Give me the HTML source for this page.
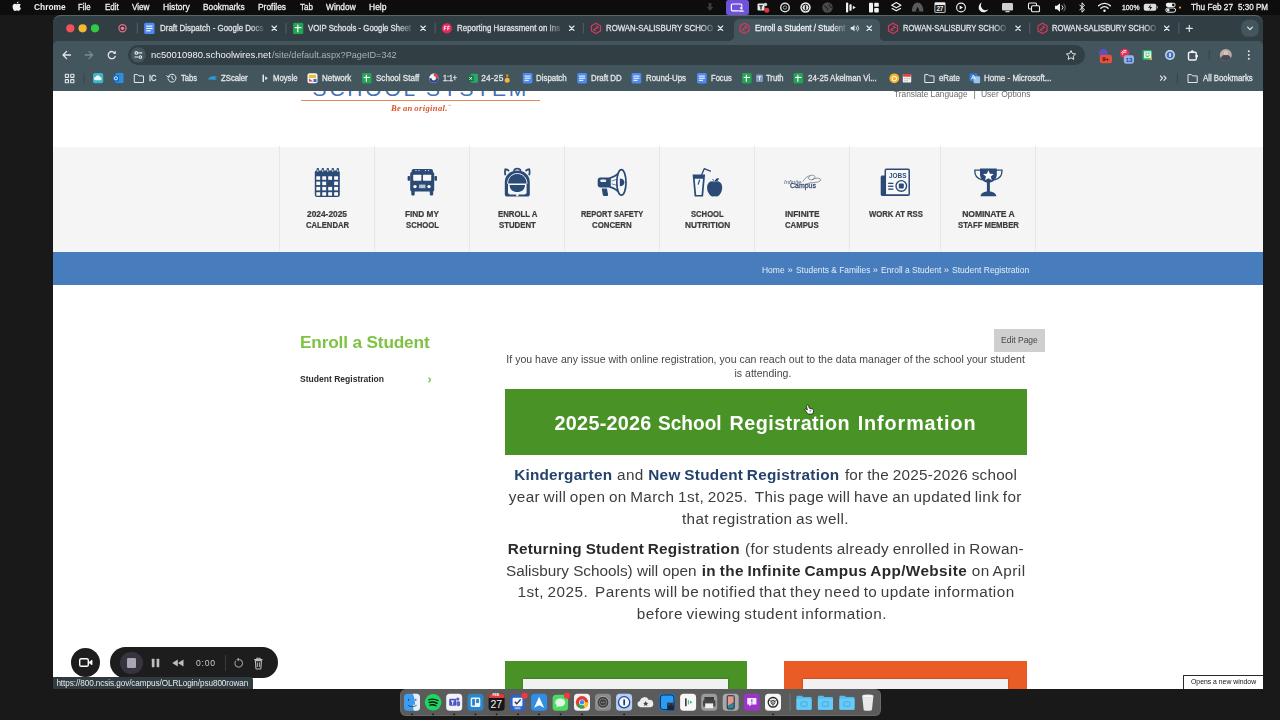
<!DOCTYPE html>
<html lang="en">
<head>
<meta charset="utf-8">
<title>Enroll a Student / Student Registration</title>
<style>
*{box-sizing:border-box;margin:0;padding:0}
html,body{width:1280px;height:720px;overflow:hidden;background:#191919;font-family:"Liberation Sans",sans-serif}
.b{position:absolute}
.t{position:absolute;white-space:pre;line-height:1}
svg{position:absolute;overflow:visible}
#txt{position:absolute;left:0;top:0;width:1280px;height:720px;will-change:transform}
</style>
</head>
<body>
<!-- macOS menu bar -->
<div class="b" style="left:0;top:0;width:1280px;height:15px;background:#0d0d0d"></div>
<div class="b" style="left:725.600px;top:0;width:23.300px;height:14.500px;background:#6f52d9;border-radius:2.500px"></div>
<svg width="1280" height="16" style="left:0;top:0" fill="#f2f2f2" stroke="none">
  <!-- apple -->
  <path d="M12.6 6.4C12.6 4.6 13.8 3.8 14.9 3.8c.7 0 1.3.4 1.8.4s1.200-.5 2-.5c.8 0 1.600.4 2.100 1.100-1.400.8-1.200 2.800.2 3.300-.4 1.200-1.400 2.900-2.500 2.900-.6 0-.9-.4-1.700-.4-.8 0-1.100.4-1.700.4-1.200 0-2.500-2.400-2.500-4.600z"/>
  <path d="M16.7 3.500c0-1 .8-1.900 1.800-2 .1 1.100-.8 2-1.800 2z"/>
  <!-- dim download arrow -->
  <path d="M708.6 3h2.800v4h2l-3.400 4-3.400-4h2z" fill="#3c3c3c"/>
  <!-- recorder icon in purple -->
  <rect x="731.4" y="4" width="10.400" height="6.800" rx="1" fill="none" stroke="#fff" stroke-width="1.200"/>
  <circle cx="741.3" cy="8" r="1.500" fill="#fff" stroke="#6f52d9" stroke-width=".6"/><path d="M738.3 11.900c0-2.400 6-2.400 6 0z" fill="#fff" stroke="#6f52d9" stroke-width=".5"/>
  <!-- teams -->
  <rect x="757.5" y="3.500" width="7" height="7" rx="1" fill="#e8e8e8"/><circle cx="765.500" cy="4.500" r="1.700" fill="#cfcfcf"/>
  <path d="M759.300 5.200h3.400v1h-1.100v3.300h-1.200v-3.300h-1.100z" fill="#0d0d0d"/>
  <circle cx="766.800" cy="10.200" r="2.500" fill="#e5343d"/>
  <!-- chatgpt-ish knot -->
  <circle cx="785" cy="7.500" r="4.300" fill="none" stroke="#d8d8d8" stroke-width="1.500"/><circle cx="785" cy="7.500" r="1.700" fill="none" stroke="#bdbdbd" stroke-width=".8"/>
  <!-- 1password -->
  <circle cx="805.500" cy="7.500" r="5.200" fill="#e9e9e9"/><circle cx="805.500" cy="7.500" r="3.300" fill="none" stroke="#0d0d0d" stroke-width=".9"/><rect x="804.800" y="5.200" width="1.400" height="4.600" rx=".6" fill="#0d0d0d"/>
  <!-- dim globe -->
  <circle cx="827.500" cy="7.500" r="5.200" fill="#4a4a4a"/><path d="M824 6l3 1.500 1 3M829 4l1.500 3.500 2-.5" stroke="#1c1c1c" stroke-width="1" fill="none"/>
  <!-- bars -->
  <rect x="846" y="2.500" width="2.200" height="10" rx=".7"/><rect x="849.400" y="4.300" width="2.200" height="6.400" rx=".7"/><path d="M852.800 5.800l3 1.700-3 1.700z"/>
  <!-- layout -->
  <rect x="869" y="2.800" width="4" height="9.600" rx=".9"/><rect x="874.200" y="2.800" width="4.600" height="4" rx=".9"/><rect x="874.200" y="8" width="4.600" height="4.400" rx=".9"/>
  <!-- layers -->
  <path d="M896.300 2.600l4.600 2.600-4.600 2.600-4.600-2.600z" fill="none" stroke="#f2f2f2" stroke-width="1.200" stroke-linejoin="round"/>
  <path d="M891.700 8.200l4.600 2.600 4.600-2.600" fill="none" stroke="#f2f2f2" stroke-width="1.200" stroke-linejoin="round"/>
  <!-- dim semicircle -->
  <path d="M911.900 11.400c0-11.800 11.400-11.800 11.400 0z" fill="#5a5a5a"/><path d="M915.600 11.400l2-4.600 2 4.600z" fill="#0d0d0d"/>
  <!-- calendar 27 -->
  <rect x="934.500" y="2.300" width="11" height="10.400" rx="1.300" fill="#ececec"/><rect x="935.300" y="5" width="9.400" height="7" rx=".6" fill="#1b1b1b"/>
  <!-- play circle -->
  <circle cx="961" cy="7.500" r="4.400" fill="none" stroke="#f2f2f2" stroke-width="1.100"/><path d="M959.700 5.500l3.300 2-3.300 2z"/>
  <!-- moon -->
  <path d="M982 2.600a5 5 0 1 0 6.300 6.600 4.600 4.600 0 0 1-6.300-6.600z"/>
  <!-- display -->
  <rect x="1002" y="3" width="11" height="7.400" rx="1.200" fill="#cfcfcf"/><rect x="1005.300" y="11" width="4.400" height="1.300" rx=".5" fill="#cfcfcf"/>
  <!-- overlapping rects -->
  <rect x="1028.500" y="3" width="8" height="6" rx="1.300" fill="none" stroke="#f2f2f2" stroke-width="1.100"/><rect x="1031.500" y="5.800" width="8" height="6" rx="1.300" fill="#0d0d0d" stroke="#f2f2f2" stroke-width="1.100"/>
  <!-- volume -->
  <path d="M1055 5.800h2l3-2.600v8.600l-3-2.600h-2z"/><path d="M1061.800 5.300a3 3 0 0 1 0 4.400" fill="none" stroke="#f2f2f2" stroke-width="1"/><path d="M1063.600 3.800a5 5 0 0 1 0 7.400" fill="none" stroke="#8a8a8a" stroke-width="1"/>
  <!-- bluetooth -->
  <path d="M1079.500 4.800l5 5-2.500 2.400v-9.400l2.500 2.400-5 5" fill="none" stroke="#f2f2f2" stroke-width="1" stroke-linejoin="round"/>
  <!-- wifi -->
  <path d="M1098.600 5.800a8.500 8.500 0 0 1 11.800 0" fill="none" stroke="#f2f2f2" stroke-width="1.400" stroke-linecap="round"/>
  <path d="M1100.900 8.200a5.200 5.200 0 0 1 7.200 0" fill="none" stroke="#f2f2f2" stroke-width="1.400" stroke-linecap="round"/>
  <circle cx="1104.500" cy="10.800" r="1.200"/>
  <!-- battery -->
  <rect x="1143.800" y="3.800" width="12.500" height="7" rx="1.800" fill="#dedede"/><rect x="1156.800" y="6" width="1.100" height="2.600" rx=".5" fill="#9a9a9a"/>
  <path d="M1150.800 4.300l-2.600 3.400h2l-.8 2.800 2.800-3.600h-2z" fill="#0d0d0d"/>
  <!-- control centre -->
  <rect x="1165.800" y="2.800" width="9.800" height="4.200" rx="2.100"/><circle cx="1173.300" cy="4.900" r="1.300" fill="#0d0d0d"/>
  <rect x="1165.800" y="8" width="9.800" height="4.200" rx="2.100" fill="none" stroke="#f2f2f2" stroke-width="1"/><circle cx="1168.200" cy="10.100" r="1.300"/>
  <circle cx="1180" cy="7.600" r="1.100" fill="#f5a623"/>
</svg>
<span class="t" style="left:936.6px;top:5.6px;font-size:6.4px;font-weight:700;color:#f0f0f0;letter-spacing:-.3px">27</span>

<!-- browser window chrome -->
<div class="b" style="left:53.3px;top:15px;width:1209.4px;height:32px;background:#313e44;border-radius:8px 8px 0 0"></div>
<div class="b" style="left:53.3px;top:15px;width:1209.4px;height:9px;border-top:1px solid rgba(120,135,142,.55);border-radius:8px 8px 0 0"></div>
<div class="b" style="left:53.3px;top:41px;width:1209.4px;height:49.5px;background:#44565d;border-radius:5px 5px 0 0"></div>
<!-- active tab -->
<div class="b" style="left:734px;top:18.900px;width:145.500px;height:22.100px;background:#44565d;border-radius:5.500px 5.500px 0 0"></div>
<svg width="1280" height="42" style="left:0;top:0">
  <path d="M729 41h5v-5a5 5 0 0 1-5 5zM884.500 41h-5v-5a5 5 0 0 0 5 5z" fill="#44565d"/>
  <!-- traffic lights -->
  <circle cx="70.300" cy="28.300" r="4.100" fill="#f2505a"/><circle cx="82.600" cy="28.300" r="4.100" fill="#f6b731"/><circle cx="95" cy="28.300" r="4.100" fill="#2fcb45"/>
  <!-- pinned recording tab -->
  <circle cx="122.500" cy="28.300" r="3.600" fill="none" stroke="#ee6a82" stroke-width="1.200"/><circle cx="122.500" cy="28.300" r="1.600" fill="#f08aa0"/>
  <!-- tab separators -->
  <g fill="#51626a"><rect x="136.800" y="23" width="1" height="10.500"/><rect x="285.500" y="23" width="1" height="10.500"/><rect x="434.600" y="23" width="1" height="10.500"/><rect x="582.800" y="23" width="1" height="10.500"/><rect x="1029.200" y="23" width="1" height="10.500"/><rect x="1178.400" y="23" width="1" height="10.500"/></g>
  <!-- docs favicon -->
  <rect x="144.200" y="22.800" width="10.300" height="11.200" rx="1.500" fill="#4d8bf0"/><g fill="#fff"><rect x="146.200" y="25.600" width="6.300" height="1.100"/><rect x="146.200" y="27.900" width="6.300" height="1.100"/><rect x="146.200" y="30.200" width="4.500" height="1.100"/></g>
  <!-- sheets favicon -->
  <rect x="293" y="22.800" width="10.300" height="11.200" rx="1.500" fill="#23a455"/><g fill="#fff"><rect x="294.800" y="27" width="6.700" height="1.200"/><rect x="297.200" y="24.600" width="1.200" height="7.600"/></g>
  <!-- reporting favicon -->
  <circle cx="446.800" cy="28.300" r="5.100" fill="#e6275f"/><path d="M444.300 26.300h2.200M444.300 28.300h1.800M444.300 26.300v4M447.800 26.300h2M447.800 28.300h1.600M447.800 26.300v4" stroke="#fff" stroke-width=".9" fill="none"/>
  <!-- schoolwires favicons (red hex) -->
  <g fill="none" stroke="#d43a5c" stroke-width="1.200" stroke-linejoin="round">
    <path d="M596 23.200l4.500 2.600v5.200l-4.500 2.600-4.500-2.600v-5.200z"/><path d="M596 26l2.200 1.200-4.400 2.400 2.200 1.200"/>
    <path d="M744.500 23.200l4.500 2.600v5.200l-4.500 2.600-4.500-2.600v-5.200z"/><path d="M744.500 26l2.200 1.200-4.400 2.400 2.200 1.200"/>
    <path d="M893 23.200l4.500 2.600v5.200l-4.500 2.600-4.500-2.600v-5.200z"/><path d="M893 26l2.200 1.200-4.400 2.400 2.200 1.200"/>
    <path d="M1042.500 23.200l4.500 2.600v5.200l-4.500 2.600-4.500-2.600v-5.200z"/><path d="M1042.500 26l2.200 1.200-4.400 2.400 2.200 1.200"/>
  </g>
  <!-- close Xs -->
  <g stroke="#e4e8ea" stroke-width="1.150" stroke-linecap="round">
    <path d="M272 26l4.500 4.500M276.500 26l-4.500 4.500"/><path d="M420.800 26l4.500 4.500M425.300 26l-4.500 4.500"/><path d="M569.500 26l4.500 4.500M574 26l-4.500 4.500"/>
    <path d="M718.200 26l4.500 4.500M722.700 26l-4.500 4.500"/><path d="M867 26l4.500 4.500M871.500 26l-4.500 4.500"/><path d="M1015.800 26l4.500 4.500M1020.300 26l-4.500 4.500"/>
    <path d="M1164.500 26l4.500 4.500M1169 26l-4.500 4.500"/>
    <path d="M1186.200 28.300h6.200M1189.300 25.200v6.200"/>
  </g>
  <!-- speaker in active tab -->
  <path d="M850.700 27h1.600l2.200-1.900v6.400l-2.200-1.900h-1.600z" fill="#e4e8ea"/><path d="M855.900 26.600a2.400 2.400 0 0 1 0 3.400M857.300 25.300a4.300 4.300 0 0 1 0 6" fill="none" stroke="#e4e8ea" stroke-width=".9"/>
  <!-- tab search button -->
  <rect x="1241.3" y="19.8" width="17.4" height="17" rx="6.5" fill="#44565d"/><path d="M1247.600 27.200l2.400 2.400 2.400-2.400" fill="none" stroke="#e4e8ea" stroke-width="1.200" stroke-linecap="round" stroke-linejoin="round"/>
</svg>

<!-- toolbar -->
<div class="b" style="left:128.200px;top:45px;width:957px;height:19.600px;background:#313e44;border-radius:10px"></div>
<svg width="1280" height="92" style="left:0;top:0">
  <circle cx="138.300" cy="54.800" r="7.600" fill="#44565d"/>
  <g stroke="#e4e8ea" stroke-width="1.100" fill="none" stroke-linecap="round"><path d="M138.600 52.900h3.200M134.800 57h3.200"/><circle cx="136.300" cy="52.900" r="1.300"/><circle cx="140.400" cy="57" r="1.300"/></g>
  <!-- back / forward / reload -->
  <g fill="none" stroke-width="1.300" stroke-linecap="round" stroke-linejoin="round">
    <path d="M70.500 55h-7.300M66.600 51.400l-3.600 3.600 3.600 3.600" stroke="#e4e8ea"/>
    <path d="M85.200 55h7.300M89 51.400l3.600 3.600-3.600 3.600" stroke="#7c8a90"/>
    <path d="M114.900 53.200a3.600 3.600 0 1 0 .3 3.200" stroke="#e4e8ea"/>
  </g>
  <path d="M115.900 50.800v3h-3z" fill="#e4e8ea"/>
  <!-- star -->
  <path d="M1071 50.600l1.400 3 3.200.4-2.400 2.200.6 3.200-2.800-1.600-2.800 1.600.6-3.200-2.400-2.200 3.200-.4z" fill="none" stroke="#e4e8ea" stroke-width="1" stroke-linejoin="round"/>
  <!-- extensions -->
  <circle cx="1103.3" cy="53.6" r="4.5" fill="#5d4ec2"/><rect x="1099.8" y="54.8" width="12.2" height="8.5" rx="2.2" fill="#e8503a"/>
  <circle cx="1124.6" cy="53.4" r="4.7" fill="#e62e55"/><path d="M1122.4 54.6a2.8 2.8 0 0 1 4-2.300M1121.400 53a4.600 4.600 0 0 1 5-2.500" stroke="#fff" stroke-width=".9" fill="none"/><rect x="1123.8" y="55.3" width="10.2" height="8.4" rx="2.100" fill="#8fb3f0"/>
  <rect x="1142.5" y="50.1" width="9.5" height="9.8" rx="1.3" fill="#27b064"/><rect x="1144" y="51.3" width="7.2" height="7" rx=".6" fill="#dff3e6"/><path d="M1145.700 55.400c1 1.300 2.600 1.300 3.600 0" stroke="#1f9a55" stroke-width="1" fill="none"/><rect x="1145.800" y="52.600" width=".9" height="1.500" fill="#1f9a55"/><rect x="1148.400" y="52.600" width=".9" height="1.500" fill="#1f9a55"/><path d="M1152 57v2.900h-3z" fill="#f0a030"/>
  <circle cx="1170" cy="55" r="4.900" fill="#d5e0f2"/><circle cx="1170" cy="55" r="3.500" fill="#3f72c2"/><rect x="1169.300" y="52.900" width="1.400" height="4.200" rx=".7" fill="#fff"/>
  <rect x="1188.500" y="52.300" width="7.800" height="7.700" rx="1.200" fill="none" stroke="#f2f4f5" stroke-width="1.400"/><circle cx="1192.300" cy="51.700" r="1.400" fill="#f2f4f5"/><circle cx="1196.700" cy="56.100" r="1.400" fill="#f2f4f5"/>
  <rect x="1208.700" y="50" width="1" height="10" fill="#33434a"/>
  <circle cx="1225.800" cy="55" r="6" fill="#b9aca6"/><path d="M1220.800 58.400a6 6 0 0 0 10 0c-.6-2.600-2.600-3.600-5-3.600s-4.400 1-5 3.600z" fill="#4a4a52"/><circle cx="1225.800" cy="53" r="2.300" fill="#d9c3b4"/>
  <g fill="#e4e8ea"><circle cx="1248.800" cy="51.300" r="1"/><circle cx="1248.800" cy="55" r="1"/><circle cx="1248.800" cy="58.700" r="1"/></g>

  <!-- bookmarks bar icons -->
  <g fill="none" stroke="#e4e8ea" stroke-width="1.100"><rect x="65.300" y="74.200" width="3.200" height="3.200" rx=".4"/><rect x="70.700" y="74.200" width="3.200" height="3.200" rx=".4"/><rect x="65.300" y="79.600" width="3.200" height="3.200" rx=".4"/><rect x="70.700" y="79.600" width="3.200" height="3.200" rx=".4"/></g>
  <rect x="83.500" y="73" width="1" height="10.500" fill="#33434a"/>
  <rect x="93" y="73" width="10.200" height="10.200" rx="1.800" fill="#3fb5c8"/><path d="M95.200 80.300a1.800 1.800 0 0 1 .5-3.500 2.300 2.300 0 0 1 4.400.3 1.600 1.600 0 0 1 0 3.200z" fill="#e7f7fa"/>
  <rect x="115.500" y="73" width="8" height="10" rx="1" fill="#2a8fe0"/><rect x="112.800" y="75.200" width="6.200" height="6.200" rx="1" fill="#1268c4"/><circle cx="115.900" cy="78.300" r="1.600" fill="none" stroke="#fff" stroke-width=".9"/>
  <!-- folders -->
  <g fill="none" stroke="#e4e8ea" stroke-width="1" stroke-linejoin="round">
    <path d="M134.300 74.600h3.400l1.200 1.300h4.600v6.600h-9.200z"/>
    <path d="M924.800 74.600h3.400l1.200 1.300h4.600v6.600h-9.200z"/>
    <path d="M1188 74.600h3.400l1.200 1.300h4.600v6.600h-9.200z"/>
  </g>
  <!-- history icon -->
  <g fill="none" stroke="#e4e8ea" stroke-width="1" stroke-linecap="round"><path d="M168.300 76.500a4 4 0 1 1-.3 2.300"/><path d="M172 76.300v2.200l1.500.9"/><path d="M166.800 75.800l1.300 1.600 1.700-1"/></g>
  <!-- zscaler -->
  <path d="M207.800 79.500c2-3.400 6-4.200 9.600-2.400-1.200.2-2 .8-2.500 1.600 1 .2 1.700.8 2 1.600-3-.9-6-.6-9.100-.8z" fill="#2a9fe0"/>
  <!-- moysle -->
  <rect x="262.500" y="74.500" width="1.500" height="7.500" rx=".5" fill="#e4e8ea"/><path d="M265.200 76.300l2.600 2-2.600 2z" fill="#e4e8ea"/>
  <!-- network -->
  <rect x="307.500" y="73.200" width="10" height="10" rx="2" fill="#f3f3f3"/><path d="M309 75h7v3h-7z" fill="#f0c02b"/><path d="M309 78.500l4 3h-4z" fill="#e23b4f"/><path d="M313.500 79h3v3h-3z" fill="#3e63d6"/>
  <!-- sheets icons -->
  <g><rect x="362" y="73" width="9.600" height="10.400" rx="1.400" fill="#23a455"/><rect x="363.600" y="76.900" width="6.400" height="1.100" fill="#fff"/><rect x="365.800" y="74.700" width="1.100" height="7" fill="#fff"/></g>
  <g><rect x="742" y="73" width="9.600" height="10.400" rx="1.400" fill="#23a455"/><rect x="743.600" y="76.900" width="6.400" height="1.100" fill="#fff"/><rect x="745.800" y="74.700" width="1.100" height="7" fill="#fff"/></g>
  <g><rect x="793.500" y="73" width="9.600" height="10.400" rx="1.400" fill="#23a455"/><rect x="795.100" y="76.900" width="6.400" height="1.100" fill="#fff"/><rect x="797.300" y="74.700" width="1.100" height="7" fill="#fff"/></g>
  <!-- 1:1+ icon -->
  <circle cx="433.800" cy="78.200" r="4.600" fill="#f3f3f3"/><path d="M433.800 73.600a4.600 4.600 0 0 1 4.600 4.600h-2.400a2.200 2.200 0 0 0-2.200-2.200z" fill="#e23b4f"/><path d="M429.200 78.200a4.600 4.600 0 0 0 9.200 0h-2.400a2.200 2.200 0 0 1-4.400 0z" fill="#2b3f9a"/>
  <!-- excel -->
  <rect x="470.500" y="73.800" width="7.500" height="9" rx=".8" fill="#2aa765"/><rect x="467.800" y="75.600" width="5.800" height="5.600" rx=".8" fill="#12703f"/><path d="M469.300 76.900l2.800 3M472.100 76.900l-2.800 3" stroke="#fff" stroke-width=".8"/>
  <!-- medal emoji -->
  <circle cx="507.200" cy="80.200" r="2.500" fill="#f2b63a"/><path d="M505.800 74.500h2.800l-.8 3h-1.200z" fill="#d98a2b"/>
  <!-- docs icons -->
  <g><rect x="522.800" y="73" width="9.600" height="10.400" rx="1.400" fill="#4d8bf0"/><g fill="#fff"><rect x="524.600" y="75.600" width="6" height="1"/><rect x="524.600" y="77.700" width="6" height="1"/><rect x="524.600" y="79.800" width="4.200" height="1"/></g></g>
  <g><rect x="577.300" y="73" width="9.600" height="10.400" rx="1.400" fill="#4d8bf0"/><g fill="#fff"><rect x="579.100" y="75.600" width="6" height="1"/><rect x="579.100" y="77.700" width="6" height="1"/><rect x="579.100" y="79.800" width="4.200" height="1"/></g></g>
  <g><rect x="631.600" y="73" width="9.600" height="10.400" rx="1.400" fill="#4d8bf0"/><g fill="#fff"><rect x="633.400" y="75.600" width="6" height="1"/><rect x="633.400" y="77.700" width="6" height="1"/><rect x="633.400" y="79.800" width="4.200" height="1"/></g></g>
  <g><rect x="697" y="73" width="9.600" height="10.400" rx="1.400" fill="#4d8bf0"/><g fill="#fff"><rect x="698.800" y="75.600" width="6" height="1"/><rect x="698.800" y="77.700" width="6" height="1"/><rect x="698.800" y="79.800" width="4.200" height="1"/></g></g>
  <!-- small T icon -->
  <rect x="756" y="74.500" width="7" height="7.500" rx="1.200" fill="#7f97bb"/><path d="M757.700 76.200h3.600v1h-1.300v3.400h-1v-3.400h-1.300z" fill="#e9eef6"/>
  <!-- emojis -->
  <circle cx="894.300" cy="78.300" r="4.900" fill="#f6b42c"/><circle cx="894.300" cy="78.600" r="2.300" fill="none" stroke="#fff" stroke-width="1"/>
  <rect x="902.800" y="74" width="8.400" height="8.600" rx="1.200" fill="#f1f1f1"/><rect x="902.800" y="74" width="8.400" height="2.800" rx="1.200" fill="#e0463c"/><g fill="#b9b9c6"><rect x="904.200" y="78" width="1.400" height="1.200"/><rect x="906.400" y="78" width="1.400" height="1.200"/><rect x="908.600" y="78" width="1.400" height="1.200"/><rect x="904.200" y="80.200" width="1.400" height="1.200"/><rect x="906.400" y="80.200" width="1.400" height="1.200"/></g>
  <!-- microsoft translate-ish icon -->
  <rect x="969.500" y="73.600" width="8" height="7.600" rx="1.200" fill="#2f7fd6"/><rect x="973.500" y="76.200" width="6.600" height="7" rx="1.200" fill="#9cc3ee"/><path d="M971.300 79.400l2-4.400 2 4.400M972 78h2.600" stroke="#fff" stroke-width=".8" fill="none"/>
  <!-- overflow chevrons -->
  <path d="M1160.400 76l2.200 2.200-2.200 2.200M1163.900 76l2.200 2.200-2.200 2.200" fill="none" stroke="#e4e8ea" stroke-width="1.100" stroke-linecap="round" stroke-linejoin="round"/>
  <rect x="1176.800" y="73" width="1" height="10.500" fill="#33434a"/>
</svg>
<span class="t" style="left:1102.300px;top:56.100px;font-size:6px;font-weight:700;color:#3a1208;letter-spacing:-.2px">9+</span>
<span class="t" style="left:1125.800px;top:56.600px;font-size:6px;font-weight:700;color:#1d3f8a;letter-spacing:-.2px">13</span>
<!-- page -->
<div class="b" style="left:53.3px;top:90.5px;width:1209.4px;height:598.5px;background:#fff"></div>
<!-- clipped district logo text (bottom part peeks below browser chrome) -->
<div class="b" style="left:296px;top:90.5px;width:250px;height:8px;overflow:hidden">
  <span class="t" style="left:16.6px;top:-12.4px;font-size:21px;color:#4471b6;letter-spacing:2.8px">SCHOOL SYSTEM</span>
</div>
<div class="b" style="left:300.8px;top:99.6px;width:239px;height:1.1px;background:#e8895a"></div>
<!-- icon nav band -->
<div class="b" style="left:53.3px;top:146.5px;width:1209.4px;height:105.5px;background:#f5f5f5"></div>

<div class="b" style="left:279.3px;top:146.4px;width:1.2px;height:105px;background:#e7e7e7"></div>
<div class="b" style="left:374.0px;top:146.4px;width:1.2px;height:105px;background:#e7e7e7"></div>
<div class="b" style="left:468.8px;top:146.4px;width:1.2px;height:105px;background:#e7e7e7"></div>
<div class="b" style="left:563.7px;top:146.4px;width:1.2px;height:105px;background:#e7e7e7"></div>
<div class="b" style="left:658.6px;top:146.4px;width:1.2px;height:105px;background:#e7e7e7"></div>
<div class="b" style="left:753.6px;top:146.4px;width:1.2px;height:105px;background:#e7e7e7"></div>
<div class="b" style="left:848.6px;top:146.4px;width:1.2px;height:105px;background:#e7e7e7"></div>
<div class="b" style="left:939.8px;top:146.4px;width:1.2px;height:105px;background:#e7e7e7"></div>
<div class="b" style="left:1035.3px;top:146.4px;width:1.2px;height:105px;background:#e7e7e7"></div>
<div class="b" style="left:53.3px;top:251.6px;width:1209.4px;height:33.1px;background:#487dbd"></div>
<svg width="1280" height="260" style="left:0;top:0" fill="#2b4a76">
<!-- calendar -->
<rect x="316.6" y="168" width="2.4" height="5" rx="1.1"/>
<rect x="321.6" y="168" width="2.4" height="5" rx="1.1"/>
<rect x="326.6" y="168" width="2.4" height="5" rx="1.1"/>
<rect x="331.6" y="168" width="2.4" height="5" rx="1.1"/>
<rect x="336.6" y="168" width="2.4" height="5" rx="1.1"/>
<rect x="314.8" y="170.6" width="25" height="26.3" rx="1.8"/>
<rect x="316.30" y="176.30" width="3.9" height="3.5" fill="#fbfbfb"/>
<rect x="322.25" y="176.30" width="3.9" height="3.5" fill="#fbfbfb"/>
<rect x="328.20" y="176.30" width="3.9" height="3.5" fill="#fbfbfb"/>
<rect x="334.15" y="176.30" width="3.9" height="3.5" fill="#fbfbfb"/>
<rect x="316.30" y="181.60" width="3.9" height="3.5" fill="#fbfbfb"/>
<rect x="322.25" y="181.60" width="3.9" height="3.5" fill="#fbfbfb"/>
<rect x="334.15" y="181.60" width="3.9" height="3.5" fill="#fbfbfb"/>
<rect x="316.30" y="186.90" width="3.9" height="3.5" fill="#fbfbfb"/>
<rect x="322.25" y="186.90" width="3.9" height="3.5" fill="#fbfbfb"/>
<rect x="328.20" y="186.90" width="3.9" height="3.5" fill="#fbfbfb"/>
<rect x="334.15" y="186.90" width="3.9" height="3.5" fill="#fbfbfb"/>
<rect x="316.30" y="192.20" width="3.9" height="3.5" fill="#fbfbfb"/>
<rect x="322.25" y="192.20" width="3.9" height="3.5" fill="#fbfbfb"/>
<rect x="328.20" y="192.20" width="3.9" height="3.5" fill="#fbfbfb"/>
<rect x="334.15" y="192.20" width="3.9" height="3.5" fill="#fbfbfb"/>
<rect x="317.3" y="169.4" width="1" height="2.6" rx=".5" fill="#dfe5ee"/>
<rect x="322.3" y="169.4" width="1" height="2.6" rx=".5" fill="#dfe5ee"/>
<rect x="327.3" y="169.4" width="1" height="2.6" rx=".5" fill="#dfe5ee"/>
<rect x="332.3" y="169.4" width="1" height="2.6" rx=".5" fill="#dfe5ee"/>
<rect x="337.3" y="169.4" width="1" height="2.6" rx=".5" fill="#dfe5ee"/>
<!-- bus -->
<rect x="411.6" y="169" width="21.4" height="5" rx="2"/>
<rect x="410.2" y="171.9" width="24" height="19.5" rx="1.6"/>
<rect x="407.6" y="176" width="2.6" height="4.8" rx=".8"/><rect x="434.4" y="176" width="2.6" height="4.8" rx=".8"/>
<rect x="411.3" y="190" width="3.4" height="5.4" rx=".8"/><rect x="429.8" y="190" width="3.4" height="5.4" rx=".8"/>
<rect x="413.2" y="174.7" width="8.2" height="6" rx=".6" fill="#fbfbfb"/><rect x="423" y="174.7" width="8.2" height="6" rx=".6" fill="#fbfbfb"/>
<circle cx="415" cy="186.6" r="1.7" fill="#fbfbfb"/><circle cx="429" cy="186.6" r="1.7" fill="#fbfbfb"/>
<rect x="419.1" y="184.6" width="6.3" height="3.6" fill="#b9c3d2"/>
<g fill="#e8edf3"><circle cx="416" cy="170.6" r=".7"/><circle cx="419" cy="170.6" r=".7"/><circle cx="425.500" cy="170.6" r=".7"/><circle cx="428.500" cy="170.6" r=".7"/></g>
<!-- backpack -->
<path d="M504.600 175.500c-.8-2.600-.6-5.600.2-7.200 1.800.2 3.600.8 4.800 1.800l-1 1.600c-.8-.6-1.800-1-2.600-1.100-.3 1.300-.1 3 .3 4.300z"/>
<path d="M530 175.500c.8-2.600.6-5.600-.2-7.200-1.800.2-3.600.8-4.800 1.800l1 1.600c.8-.6 1.800-1 2.600-1.100.3 1.300.1 3-.3 4.300z"/>
<path d="M513.200 171c0-4.200 8.200-4.200 8.200 0h-1.700c0-2-4.800-2-4.800 0z"/>
<path d="M504.800 194.200v-12.200c0-6.800 5.600-11.400 12.500-11.400s12.500 4.600 12.500 11.400v12.200c0 1.400-1 2.400-2.400 2.400h-20.200c-1.400 0-2.400-1-2.400-2.400z"/>
<path d="M507.600 183.800c0-6 4.300-10.300 9.700-10.300s9.700 4.300 9.700 10.300" fill="none" stroke="#e9eef5" stroke-width="1"/>
<path d="M508 183.600h18.600v8.600c0 1.300-.9 2.200-2.200 2.200h-14.200c-1.300 0-2.200-.9-2.200-2.200z" fill="#f4f6f9"/>
<path d="M509.600 185h15.400c0 4.400-3.400 7-7.700 7s-7.700-2.600-7.700-7z"/>
<rect x="516.200" y="193.200" width="2.200" height="3" fill="#f4f6f9"/>
<!-- megaphone -->
<path d="M600.200 177.400h8.600c3.800-.8 8.200-3.400 11.800-7.400v25c-3.600-4-8-6.600-11.800-7.400h-8.600c-1.400 0-2.500-1.100-2.500-2.500v-5.200c0-1.400 1.100-2.500 2.500-2.500z"/>
<path d="M610.800 178.800c3-.9 6.200-2.800 8.600-5.200v17.800c-2.400-2.400-5.600-4.300-8.600-5.200z" fill="#f6f7f9"/>
<ellipse cx="621.400" cy="182.400" rx="4.600" ry="12.800" fill="#f6f7f9" stroke="#2b4a76" stroke-width="1.700"/>
<path d="M619.800 178.600c2.800 0 4.600 1.600 4.600 3.800s-1.800 3.800-4.600 3.800z"/>
<rect x="600.200" y="179.600" width="6" height="2.400" rx="1.200" fill="#eef1f5"/>
<path d="M601.700 188.400h5.200l1.200 6c.2.900-.3 1.500-1.200 1.500h-2.600c-.8 0-1.300-.4-1.500-1.200z"/>
<path d="M611.500 181l6.500-2M611.500 183.800l6.500 2" stroke="#2b4a76" stroke-width=".7" fill="none"/>
<!-- nutrition -->
<path d="M692.600 174.400h12.500l-2 22.200h-8.500z"/>
<path d="M694.700 178.800h8.300l-1.500 16.200h-5.300z" fill="#f6f7f9"/>
<path d="M701.600 175l2.600-6.300 6.200 2.500" fill="none" stroke="#2b4a76" stroke-width="1.300" stroke-linecap="round" stroke-linejoin="round"/>
<path d="M699.700 179.600l-1.600 5" stroke="#2b4a76" stroke-width="1.200"/>
<path d="M714.400 182.200c1.600-1.400 4.200-1.300 5.900.2 2.400 2.200 2.500 6.800.6 10.400-1.300 2.500-3.300 4.200-5 3.600-.9-.3-1.600-.3-2.500 0-1.700.6-3.700-1.100-5-3.600-1.900-3.600-1.800-8.200.6-10.400 1.700-1.500 3.900-1.600 5.400-.2z"/>
<path d="M714.600 181.800c.2-2.300 1.900-3.900 4.300-3.900-.1 2.400-1.900 4-4.300 3.900z"/>
<path d="M714.200 182c-.3-1.300-.9-2.300-1.800-3" stroke="#2b4a76" stroke-width=".9" fill="none"/>
<!-- infinite campus swirl -->
<path d="M803 181.500c1.500-3 4.500-5.800 8.500-6.200 3-.3 4.600 1.600 2.600 3.400-1.200 1-3.400 1.400-5 .6-1.400-.8-.8-2.400 1-2.800M812 179.800c2.600-1.800 6.400-2.200 8.300-.9 1.300 1-.2 2.600-2.800 3.200-2.200.5-5.200.3-7.600.8-2 .4-3.600 1.200-4.800 2.200" fill="none" stroke="#5a6a86" stroke-width=".7"/>
<!-- jobs -->
<path d="M880.700 177.200c0-.9.700-1.600 1.600-1.600h3.400v18.600c0 1-.8 1.800-1.800 1.800h-1.400c-1 0-1.800-.8-1.800-1.800z"/>
<rect x="885.300" y="169.300" width="23.900" height="26" rx="1" fill="#f8f9fb" stroke="#2b4a76" stroke-width="1.500"/>
<path d="M882.500 196h25.500v-1.500h-25.500z"/>
<rect x="888.200" y="182.700" width="5.200" height="1.300"/><rect x="888.200" y="185.600" width="5.200" height="1.300"/><rect x="888.200" y="188.500" width="5.200" height="1.300"/>
<circle cx="901.300" cy="185.900" r="5.300" fill="none" stroke="#2b4a76" stroke-width="1.400"/>
<rect x="898.800" y="183.400" width="5" height="5" rx="1"/>
<!-- trophy -->
<path d="M980 168.600h16.800v5.600c0 4.800-3.600 8.400-8.400 8.400s-8.400-3.600-8.400-8.400z"/>
<path d="M980.600 170.200h-5.800c-.2 5 2.600 8.600 7.400 9.600M996.200 170.200h5.800c.2 5-2.600 8.600-7.400 9.600" fill="none" stroke="#2b4a76" stroke-width="1.300"/>
<path d="M986.900 181.500h3v10.500h-3z"/>
<path d="M980.600 196.200c0-2.800 3.200-4.600 7.800-4.600s7.800 1.800 7.800 4.600z"/>
<path d="M988.4 170.2l1.55 3.5 3.8.35-2.9 2.5.9 3.7-3.35-2-3.35 2 .9-3.7-2.9-2.5 3.8-.35z" fill="#fbfbfb"/>
</svg>
<!-- content boxes -->
<div class="b" style="left:505px;top:389.2px;width:521.5px;height:65.7px;background:#489226"></div>
<div class="b" style="left:994px;top:328.5px;width:51px;height:23px;background:#cfcfcf"></div>
<div class="b" style="left:505px;top:660.5px;width:241.5px;height:28.5px;background:#489226"></div>
<div class="b" style="left:522.8px;top:678.9px;width:205.4px;height:10.1px;background:#f1f1f1;box-shadow:0 0 2px rgba(0,0,0,.35)"></div>
<div class="b" style="left:784px;top:660.5px;width:242.5px;height:28.5px;background:#ea5c26"></div>
<div class="b" style="left:803px;top:678.9px;width:205.2px;height:10.1px;background:#f1f1f1;box-shadow:0 0 2px rgba(0,0,0,.35)"></div>
<!-- mask anything that leaks below the window -->
<div class="b" style="left:0;top:689px;width:1280px;height:31px;background:#191919"></div>
<!-- hand cursor -->
<svg width="12" height="12" style="left:804.100px;top:404.100px" viewBox="0 0 12 12"><path d="M3.300 1.200c.6-.3 1.100 0 1.300.6l.7 2.300 3.200.9c.9.300 1.300 1 1.100 2l-.5 2.100c-.2.700-.7 1-1.400 1h-2.900c-.5 0-.9-.2-1.200-.6l-2.600-3.300c-.3-.5-.2-1 .2-1.200.4-.2.900-.1 1.200.2l.9.900-.8-3.800c-.1-.5.200-.9.800-1.100z" fill="#fff" stroke="#1c2a14" stroke-width=".9" stroke-linejoin="round"/><circle cx="6.400" cy="6.800" r="1" fill="#9a96b6"/></svg>
<!-- screen recorder overlay -->
<div class="b" style="left:71.200px;top:648.200px;width:29.200px;height:29.200px;border-radius:50%;background:#1d1d1e"></div>
<div class="b" style="left:110.400px;top:647px;width:168px;height:31.400px;border-radius:15.700px;background:#1d1d1e"></div>
<div class="b" style="left:120.400px;top:651.700px;width:22.400px;height:22.400px;border-radius:50%;background:#38343f"></div>
<div class="b" style="left:126.900px;top:658.100px;width:9.600px;height:9.600px;border-radius:1.200px;background:#aaa6b6"></div>
<div class="b" style="left:225.400px;top:655px;width:1px;height:16px;background:#3a3a3c"></div>
<svg width="300" height="40" style="left:0;top:640px">
  <rect x="79.700" y="18.700" width="8.600" height="7.600" rx="1.600" fill="none" stroke="#fff" stroke-width="1.400"/><path d="M88.800 22.500l3.200-2.300v4.600z" fill="#fff" stroke="#fff" stroke-width=".8" stroke-linejoin="round"/>
  <rect x="151.800" y="18.700" width="2.700" height="8.500" rx=".6" fill="#bdbdbf"/><rect x="156.600" y="18.700" width="2.700" height="8.500" rx=".6" fill="#bdbdbf"/>
  <path d="M177.800 19.600v6.900l-5.600-3.450zM183.500 19.600v6.900l-5.600-3.450z" fill="#bdbdbf"/>
  <path d="M235.700 21a3.800 3.800 0 1 0 2.700-1.500" fill="none" stroke="#9a9a9c" stroke-width="1.100" stroke-linecap="round"/><path d="M238.800 17.500l-2.400 2 2.400 2z" fill="#9a9a9c"/>
  <path d="M254.600 19.600h7.600M256.800 19.400v-1.200h3.200v1.200" fill="none" stroke="#bdbdbf" stroke-width="1.100" stroke-linecap="round"/>
  <path d="M255.400 20.600h6l-.5 7.600c0 .5-.4.800-.9.800h-3.200c-.5 0-.9-.3-.9-.8z" fill="none" stroke="#bdbdbf" stroke-width="1.100" stroke-linejoin="round"/>
  <path d="M257.400 22.400v4.600M259.400 22.400v4.600" stroke="#bdbdbf" stroke-width=".9"/>
</svg>
<!-- link status bubble -->
<div class="b" style="left:53.3px;top:677.100px;width:200px;height:12px;background:#2f3b40;border-radius:0 3px 0 0"></div>
<!-- tooltip -->
<div class="b" style="left:1183.300px;top:675px;width:79.500px;height:14.200px;background:#fff;border:1px solid #2a2a2a;border-right:none;border-bottom:none;border-radius:1px 0 4px 0"></div>
<!-- dock -->
<div class="b" style="left:400px;top:689px;width:480.500px;height:27.400px;background:#5b5b5b;border-radius:6px;border:1px solid #696969;border-top-color:#5b5b5b"></div>

<svg width="1280" height="720" style="left:0;top:0"><g transform="translate(404.0,693.8)"><rect width="16" height="17" rx="3.600" fill="#3d9cf0"/><path d="M8.800 0h3.600a3.600 3.600 0 0 1 3.600 3.600v9.800a3.600 3.600 0 0 1-3.600 3.600h-2.600c-.6-2-.8-4-.7-6h2c0-4-.8-8-2.300-11z" fill="#e9eef4"/><path d="M4.600 5v2M11.800 5v2" stroke="#1d3a5c" stroke-width=".9"/><path d="M4 11.500c2.600 1.800 6 1.800 8.600 0" stroke="#1d3a5c" stroke-width=".8" fill="none"/></g>
<circle cx="412.0" cy="714.3" r=".9" fill="#111"/>
<g transform="translate(425.1,693.8)"><circle cx="8" cy="8.500" r="8.300" fill="#1ed760"/><path d="M3.600 6c3-1 6.400-.7 9.200.8M4.200 8.700c2.600-.8 5.400-.5 7.700.8M4.800 11.300c2.100-.6 4.200-.4 6 .6" stroke="#111" stroke-width="1.400" stroke-linecap="round" fill="none"/></g>
<circle cx="433.1" cy="714.3" r=".9" fill="#111"/>
<g transform="translate(446.2,693.8)"><rect width="16" height="17" rx="3.600" fill="#f3f3f7"/><rect x="3" y="5" width="7" height="7" rx="1" fill="#4b53bc"/><circle cx="11.600" cy="5.300" r="1.700" fill="#5b63cf"/><rect x="10.300" y="7.400" width="3.600" height="5" rx="1.400" fill="#5b63cf"/><path d="M4.800 6.800h3.400v1h-1.200v3.200h-1v-3.200h-1.200z" fill="#fff"/></g>
<circle cx="454.2" cy="714.3" r=".9" fill="#111"/>
<g transform="translate(467.5,693.8)"><rect width="16" height="17" rx="3.600" fill="#2b86c9"/><rect x="3.200" y="3.700" width="9.600" height="9.600" rx="1.400" fill="#e9f2fa"/><rect x="4.600" y="5.100" width="2.900" height="6.500" rx=".5" fill="#2b86c9"/><rect x="8.600" y="5.100" width="2.900" height="4" rx=".5" fill="#2b86c9"/></g>
<circle cx="475.5" cy="714.3" r=".9" fill="#111"/>
<g transform="translate(488.6,693.8)"><rect width="16" height="17" rx="3.600" fill="#161616"/><path d="M3.600 0h8.800a3.600 3.600 0 0 1 3.600 3.600v.6h-16v-.6a3.600 3.600 0 0 1 3.600-3.600z" fill="#e23a3a"/></g>
<circle cx="496.6" cy="714.3" r=".9" fill="#111"/>
<g transform="translate(510.0,693.8)"><rect y="1" width="15" height="16" rx="3" fill="#2f62c8"/><rect x="2.600" y="4" width="9.800" height="8.400" rx="1" fill="#f2f5fb"/><path d="M4.800 8l2 2 3.800-4.400" stroke="#1b2b55" stroke-width="1.300" fill="none"/><rect x="4.500" y="13.300" width="6" height="2.200" fill="#8fb0ef"/><circle cx="14.600" cy="1.700" r="3.100" fill="#f0383d"/></g>
<circle cx="518.0" cy="714.3" r=".9" fill="#111"/>
<g transform="translate(531.1,693.8)"><rect width="16" height="17" rx="3.600" fill="#2f8fe6"/><path d="M8 3l5 11-5-2.600-5 2.600z" fill="#fff"/></g>
<circle cx="539.1" cy="714.3" r=".9" fill="#111"/>
<g transform="translate(552.6,693.8)"><rect y="1" width="15.500" height="16" rx="3.600" fill="#4cd964"/><ellipse cx="7.600" cy="8.600" rx="5" ry="4" fill="#dff7e3"/><path d="M4.500 11.500l-1 2.200 2.800-1.200z" fill="#dff7e3"/><circle cx="14.400" cy="1.900" r="3.100" fill="#f0383d"/></g>
<circle cx="560.6" cy="714.3" r=".9" fill="#111"/>
<g transform="translate(574.0,693.8)"><rect width="16" height="17" rx="3.600" fill="#f2f2f2"/><circle cx="8" cy="8.500" r="6.200" fill="#e33b2e"/><path d="M8 8.500l-5.400 3.100a6.200 6.200 0 0 0 5.400 3.100z M8 8.500l-5.400 3.100a6.200 6.200 0 0 0 8.100 2.500z" fill="#2da94f"/><path d="M8 8.500h6.200a6.200 6.200 0 0 1-3.500 5.600z" fill="#fcc31e"/><circle cx="8" cy="8.500" r="2.900" fill="#f2f2f2"/><circle cx="8" cy="8.500" r="2.200" fill="#4285f4"/></g>
<circle cx="582.0" cy="714.3" r=".9" fill="#111"/>
<g transform="translate(595.0,693.8)"><rect width="16" height="17" rx="3.600" fill="#8a8a8a"/><circle cx="8" cy="8.500" r="6" fill="#3f3f3f" stroke="#bdbdbd" stroke-width=".8"/><circle cx="8" cy="8.500" r="3.600" fill="none" stroke="#7b7b7b" stroke-width="1"/><path d="M6 8.500h4" stroke="#8d8d8d" stroke-width=".9"/></g>
<g transform="translate(616.1,693.8)"><rect width="16" height="17" rx="3.600" fill="#b9cdf0"/><circle cx="8" cy="8.500" r="5.600" fill="#f4f7fc" stroke="#1c4a9c" stroke-width="1.300"/><rect x="7.200" y="5.400" width="1.700" height="6.200" rx=".8" fill="#1c3c78"/></g>
<circle cx="624.1" cy="714.3" r=".9" fill="#111"/>
<g transform="translate(637.7,693.8)"><path d="M2.600 13.500a3.200 3.200 0 0 1-.3-6.300 4.600 4.600 0 0 1 8.800-1 3.700 3.700 0 0 1 1.500 7.300z" fill="#ececec"/><path d="M8 7.200l.8 1.700 1.800.2-1.300 1.200.3 1.800-1.600-.9-1.600.9.300-1.800-1.300-1.200 1.800-.2z" fill="#444"/></g>
<g transform="translate(659.2,693.8)"><rect width="16" height="17" rx="3.600" fill="#1b78d8"/><rect x="1.200" y="1.200" width="13.600" height="14.600" rx="2.800" fill="#2a9cf3" stroke="#0c2f55" stroke-width="1"/><path d="M8 9h7v7.500h-7z" fill="#18263c"/><circle cx="10" cy="10.300" r="1.700" fill="#33435e"/><circle cx="14" cy="10.300" r="1.700" fill="#33435e"/></g>
<g transform="translate(680.1,693.8)"><rect width="16" height="17" rx="3.600" fill="#f7f7f7"/><rect x="5" y="4.500" width="1.500" height="8" rx=".5" fill="#2b2b2b"/><path d="M7.800 6.200h.9v4.600h-.9zM9.800 7l2.600 1.500-2.600 1.500z" fill="#35b37e"/></g>
<g transform="translate(701.2,693.8)"><rect width="16" height="17" rx="3.600" fill="#9b9b9b"/><rect x="3.200" y="3.200" width="9.600" height="4" fill="#3c3c3c"/><rect x="1.800" y="6.500" width="12.400" height="6.200" rx="1" fill="#454545"/><rect x="4" y="9.600" width="8" height="4.800" fill="#f0f0f0"/></g>
<g transform="translate(722.7,693.8)"><rect width="16" height="17" rx="3.600" fill="#a9a9a9"/><rect x="4" y="1.400" width="8" height="14.200" rx="1.800" fill="#1e2a38"/><path d="M5 2.400h6v6l-6 4z" fill="#e6978c"/><path d="M11 8.400v6.200h-6v-2.200z" fill="#2a8a9a"/></g>
<g transform="translate(743.8,693.8)"><rect width="16" height="17" rx="3.600" fill="#9b35c8"/><path d="M3.400 4.200h9.200v6.600h-5l-2.200 2v-2h-2z" fill="#f6ecfb"/><rect x="7.500" y="5.400" width="1.100" height="2.800" fill="#9b35c8"/><rect x="7.500" y="8.900" width="1.100" height="1" fill="#9b35c8"/></g>
<g transform="translate(765.0,693.8)"><rect width="16" height="17" rx="3.600" fill="#f6f6f6"/><circle cx="8" cy="8.500" r="4.800" fill="none" stroke="#222" stroke-width="1.300"/><circle cx="8" cy="8.500" r="2" fill="none" stroke="#333" stroke-width=".9"/><path d="M4 6.200l4 2.300M12 6.200l-4 2.300M8 13.200v-4.700" stroke="#333" stroke-width=".7"/></g>
<circle cx="773.0" cy="714.3" r=".9" fill="#111"/>
<rect x="789.500" y="694" width="1" height="17" fill="#777"/>
<g transform="translate(796.0,693.8)"><path d="M.5 3.200c0-.8.500-1.300 1.300-1.300h4l1.200 1.400h7.300c.8 0 1.300.5 1.300 1.300v10c0 .8-.5 1.300-1.300 1.300h-12.500c-.8 0-1.300-.5-1.300-1.300z" fill="#54bdf0"/><path d="M.5 5h15.100v9.600c0 .8-.5 1.300-1.300 1.300h-12.500c-.8 0-1.300-.5-1.300-1.300z" fill="#67caf7"/><rect x="5" y="8" width="6" height="4.500" rx=".8" fill="none" stroke="#3fa5d8" stroke-width=".8"/></g>
<g transform="translate(817.4,693.8)"><path d="M.5 3.200c0-.8.500-1.300 1.300-1.300h4l1.200 1.400h7.300c.8 0 1.300.5 1.300 1.300v10c0 .8-.5 1.300-1.300 1.300h-12.500c-.8 0-1.300-.5-1.300-1.300z" fill="#54bdf0"/><path d="M.5 5h15.100v9.600c0 .8-.5 1.300-1.300 1.300h-12.500c-.8 0-1.300-.5-1.300-1.300z" fill="#67caf7"/><rect x="5" y="8" width="6" height="4.500" rx=".8" fill="none" stroke="#3fa5d8" stroke-width=".8"/></g>
<g transform="translate(838.9,693.8)"><path d="M.5 3.200c0-.8.500-1.300 1.300-1.300h4l1.200 1.400h7.300c.8 0 1.300.5 1.300 1.300v10c0 .8-.5 1.300-1.300 1.300h-12.500c-.8 0-1.300-.5-1.300-1.300z" fill="#54bdf0"/><path d="M.5 5h15.100v9.600c0 .8-.5 1.300-1.300 1.300h-12.500c-.8 0-1.300-.5-1.300-1.300z" fill="#67caf7"/><rect x="5" y="8" width="6" height="4.500" rx=".8" fill="none" stroke="#3fa5d8" stroke-width=".8"/></g>
<g transform="translate(859.8,693.8)"><path d="M2.400 2.200h11.200l-1.400 13.300c-.1.900-.7 1.400-1.600 1.400h-5.200c-.9 0-1.500-.5-1.600-1.400z" fill="#e9e9e9"/><ellipse cx="8" cy="2.300" rx="5.600" ry="1.400" fill="#fafafa" stroke="#cfcfcf" stroke-width=".5"/></g></svg>
<span class="t" style="left:490.600px;top:699.300px;font-size:10.500px;color:#f2f2f2;letter-spacing:-.2px">27</span>
<span class="t" style="left:492.400px;top:694.300px;font-size:3.400px;color:#fff;font-weight:700">FEB</span>
<div id="txt">
<span class="t" style='left:33.80px;top:3.47px;font-size:8.9px;color:#f0f0f0;font-weight:700;transform:scaleX(0.9449);transform-origin:0 0;'>Chrome</span>
<span class="t" style='left:78.00px;top:3.47px;font-size:8.9px;color:#f0f0f0;transform:scaleX(0.8734);transform-origin:0 0;-webkit-text-stroke:.28px currentColor;'>File</span>
<span class="t" style='left:104.50px;top:3.47px;font-size:8.9px;color:#f0f0f0;transform:scaleX(0.9021);transform-origin:0 0;-webkit-text-stroke:.28px currentColor;'>Edit</span>
<span class="t" style='left:132.00px;top:3.47px;font-size:8.9px;color:#f0f0f0;transform:scaleX(0.9173);transform-origin:0 0;-webkit-text-stroke:.28px currentColor;'>View</span>
<span class="t" style='left:163.30px;top:3.47px;font-size:8.9px;color:#f0f0f0;transform:scaleX(0.9665);transform-origin:0 0;-webkit-text-stroke:.28px currentColor;'>History</span>
<span class="t" style='left:203.30px;top:3.47px;font-size:8.9px;color:#f0f0f0;transform:scaleX(0.9394);transform-origin:0 0;-webkit-text-stroke:.28px currentColor;'>Bookmarks</span>
<span class="t" style='left:258.30px;top:3.47px;font-size:8.9px;color:#f0f0f0;transform:scaleX(0.9461);transform-origin:0 0;-webkit-text-stroke:.28px currentColor;'>Profiles</span>
<span class="t" style='left:299.50px;top:3.47px;font-size:8.9px;color:#f0f0f0;transform:scaleX(0.9083);transform-origin:0 0;-webkit-text-stroke:.28px currentColor;'>Tab</span>
<span class="t" style='left:325.80px;top:3.47px;font-size:8.9px;color:#f0f0f0;transform:scaleX(0.9405);transform-origin:0 0;-webkit-text-stroke:.28px currentColor;'>Window</span>
<span class="t" style='left:368.80px;top:3.47px;font-size:8.9px;color:#f0f0f0;transform:scaleX(0.9581);transform-origin:0 0;-webkit-text-stroke:.28px currentColor;'>Help</span>
<span class="t" style='left:1121.80px;top:4.27px;font-size:7.6px;color:#f0f0f0;transform:scaleX(0.9003);transform-origin:0 0;-webkit-text-stroke:.28px currentColor;'>100%</span>
<span class="t" style='left:1190.50px;top:3.47px;font-size:8.9px;color:#f0f0f0;transform:scaleX(0.9253);transform-origin:0 0;-webkit-text-stroke:.28px currentColor;'>Thu Feb 27</span>
<span class="t" style='left:1238.00px;top:3.47px;font-size:8.9px;color:#f0f0f0;transform:scaleX(0.9074);transform-origin:0 0;-webkit-text-stroke:.28px currentColor;'>5:30 PM</span>
<span class="t" style='left:159.50px;top:24.32px;font-size:8.6px;color:#dfe3e6;transform:scaleX(0.9260);transform-origin:0 0;-webkit-text-stroke:.28px currentColor;'>Draft Dispatch - Google Docs</span>
<span class="t" style='left:308.00px;top:24.32px;font-size:8.6px;color:#dfe3e6;transform:scaleX(0.9071);transform-origin:0 0;-webkit-text-stroke:.28px currentColor;'>VOIP Schools - Google Sheet</span>
<span class="t" style='left:456.80px;top:24.32px;font-size:8.6px;color:#dfe3e6;transform:scaleX(0.9232);transform-origin:0 0;-webkit-text-stroke:.28px currentColor;'>Reporting Harassment on Ins</span>
<span class="t" style='left:605.50px;top:24.32px;font-size:8.6px;color:#dfe3e6;transform:scaleX(0.9121);transform-origin:0 0;-webkit-text-stroke:.28px currentColor;'>ROWAN-SALISBURY SCHOO</span>
<span class="t" style='left:754.50px;top:24.32px;font-size:8.6px;color:#eef1f3;transform:scaleX(0.9239);transform-origin:0 0;-webkit-text-stroke:.28px currentColor;'>Enroll a Student / Student</span>
<span class="t" style='left:903.00px;top:24.32px;font-size:8.6px;color:#dfe3e6;transform:scaleX(0.8780);transform-origin:0 0;-webkit-text-stroke:.28px currentColor;'>ROWAN-SALISBURY SCHOO</span>
<span class="t" style='left:1051.80px;top:24.32px;font-size:8.6px;color:#dfe3e6;transform:scaleX(0.8882);transform-origin:0 0;-webkit-text-stroke:.28px currentColor;'>ROWAN-SALISBURY SCHOO</span>
<span class="t" style='left:151.30px;top:49.70px;font-size:9.8px;color:#f1f3f4;transform:scaleX(0.9663);transform-origin:0 0;'>nc50010980.schoolwires.net</span>
<span class="t" style='left:271.60px;top:49.70px;font-size:9.8px;color:#a9b4b9;transform:scaleX(0.9326);transform-origin:0 0;'>/site/default.aspx?PageID=342</span>
<span class="t" style='left:149.30px;top:74.49px;font-size:8.4px;color:#e3e7e9;transform:scaleX(0.8955);transform-origin:0 0;-webkit-text-stroke:.28px currentColor;'>IC</span>
<span class="t" style='left:181.00px;top:74.49px;font-size:8.4px;color:#e3e7e9;transform:scaleX(0.9038);transform-origin:0 0;-webkit-text-stroke:.28px currentColor;'>Tabs</span>
<span class="t" style='left:221.30px;top:74.49px;font-size:8.4px;color:#e3e7e9;transform:scaleX(0.9252);transform-origin:0 0;-webkit-text-stroke:.28px currentColor;'>ZScaler</span>
<span class="t" style='left:272.50px;top:74.49px;font-size:8.4px;color:#e3e7e9;transform:scaleX(0.9234);transform-origin:0 0;-webkit-text-stroke:.28px currentColor;'>Moysle</span>
<span class="t" style='left:322.00px;top:74.49px;font-size:8.4px;color:#e3e7e9;transform:scaleX(0.9538);transform-origin:0 0;-webkit-text-stroke:.28px currentColor;'>Network</span>
<span class="t" style='left:375.50px;top:74.49px;font-size:8.4px;color:#e3e7e9;transform:scaleX(0.9619);transform-origin:0 0;-webkit-text-stroke:.28px currentColor;'>School Staff</span>
<span class="t" style='left:443.00px;top:74.49px;font-size:8.4px;color:#e3e7e9;transform:scaleX(0.8461);transform-origin:0 0;-webkit-text-stroke:.28px currentColor;'>1:1+</span>
<span class="t" style='left:481.30px;top:74.49px;font-size:8.4px;color:#e3e7e9;letter-spacing:0.145px;-webkit-text-stroke:.28px currentColor;'>24-25</span>
<span class="t" style='left:536.30px;top:74.49px;font-size:8.4px;color:#e3e7e9;transform:scaleX(0.9419);transform-origin:0 0;-webkit-text-stroke:.28px currentColor;'>Dispatch</span>
<span class="t" style='left:591.30px;top:74.49px;font-size:8.4px;color:#e3e7e9;transform:scaleX(0.9424);transform-origin:0 0;-webkit-text-stroke:.28px currentColor;'>Draft DD</span>
<span class="t" style='left:646.30px;top:74.49px;font-size:8.4px;color:#e3e7e9;transform:scaleX(0.9440);transform-origin:0 0;-webkit-text-stroke:.28px currentColor;'>Round-Ups</span>
<span class="t" style='left:710.80px;top:74.49px;font-size:8.4px;color:#e3e7e9;transform:scaleX(0.9074);transform-origin:0 0;-webkit-text-stroke:.28px currentColor;'>Focus</span>
<span class="t" style='left:765.50px;top:74.49px;font-size:8.4px;color:#e3e7e9;transform:scaleX(0.9091);transform-origin:0 0;-webkit-text-stroke:.28px currentColor;'>Truth</span>
<span class="t" style='left:807.50px;top:74.49px;font-size:8.4px;color:#e3e7e9;transform:scaleX(0.9492);transform-origin:0 0;-webkit-text-stroke:.28px currentColor;'>24-25 Akelman Vi...</span>
<span class="t" style='left:939.30px;top:74.49px;font-size:8.4px;color:#e3e7e9;transform:scaleX(0.9258);transform-origin:0 0;-webkit-text-stroke:.28px currentColor;'>eRate</span>
<span class="t" style='left:983.80px;top:74.49px;font-size:8.4px;color:#e3e7e9;transform:scaleX(0.9543);transform-origin:0 0;-webkit-text-stroke:.28px currentColor;'>Home - Microsoft...</span>
<span class="t" style='left:1203.30px;top:74.49px;font-size:8.4px;color:#e3e7e9;transform:scaleX(0.9284);transform-origin:0 0;-webkit-text-stroke:.28px currentColor;'>All Bookmarks</span>
<span class="t" style='left:391.00px;top:103.72px;font-size:8.6px;color:#d9572f;font-weight:700;font-family:"Liberation Serif",serif;font-style:italic;letter-spacing:0.356px;word-spacing:-0.867px;'>Be an original.</span>
<span class="t" style='left:894.00px;top:90.33px;font-size:9.3px;color:#6a6a6a;transform:scaleX(0.8924);transform-origin:0 0;'>Translate Language</span>
<span class="t" style='left:973.40px;top:90.33px;font-size:9.3px;color:#6a6a6a;'>|</span>
<span class="t" style='left:980.50px;top:90.33px;font-size:9.3px;color:#6a6a6a;transform:scaleX(0.9122);transform-origin:0 0;'>User Options</span>
<span class="t" style='left:307.00px;top:210.02px;font-size:8.6px;color:#3b3b3b;font-weight:700;transform:scaleX(0.9730);transform-origin:0 0;-webkit-text-stroke:.22px currentColor;'>2024-2025</span>
<span class="t" style='left:305.80px;top:220.62px;font-size:8.6px;color:#3b3b3b;font-weight:700;transform:scaleX(0.8918);transform-origin:0 0;-webkit-text-stroke:.22px currentColor;'>CALENDAR</span>
<span class="t" style='left:405.00px;top:210.02px;font-size:8.6px;color:#3b3b3b;font-weight:700;transform:scaleX(0.9624);transform-origin:0 0;-webkit-text-stroke:.22px currentColor;'>FIND MY</span>
<span class="t" style='left:405.50px;top:220.62px;font-size:8.6px;color:#3b3b3b;font-weight:700;transform:scaleX(0.8976);transform-origin:0 0;-webkit-text-stroke:.22px currentColor;'>SCHOOL</span>
<span class="t" style='left:497.50px;top:210.02px;font-size:8.6px;color:#3b3b3b;font-weight:700;transform:scaleX(0.9090);transform-origin:0 0;-webkit-text-stroke:.22px currentColor;'>ENROLL A</span>
<span class="t" style='left:498.50px;top:220.62px;font-size:8.6px;color:#3b3b3b;font-weight:700;transform:scaleX(0.9090);transform-origin:0 0;-webkit-text-stroke:.22px currentColor;'>STUDENT</span>
<span class="t" style='left:581.00px;top:210.02px;font-size:8.6px;color:#3b3b3b;font-weight:700;transform:scaleX(0.8640);transform-origin:0 0;-webkit-text-stroke:.22px currentColor;'>REPORT SAFETY</span>
<span class="t" style='left:592.30px;top:220.62px;font-size:8.6px;color:#3b3b3b;font-weight:700;transform:scaleX(0.9136);transform-origin:0 0;-webkit-text-stroke:.22px currentColor;'>CONCERN</span>
<span class="t" style='left:690.80px;top:210.02px;font-size:8.6px;color:#3b3b3b;font-weight:700;transform:scaleX(0.8894);transform-origin:0 0;-webkit-text-stroke:.22px currentColor;'>SCHOOL</span>
<span class="t" style='left:684.80px;top:220.62px;font-size:8.6px;color:#3b3b3b;font-weight:700;transform:scaleX(0.9659);transform-origin:0 0;-webkit-text-stroke:.22px currentColor;'>NUTRITION</span>
<span class="t" style='left:785.00px;top:210.02px;font-size:8.6px;color:#3b3b3b;font-weight:700;transform:scaleX(0.9634);transform-origin:0 0;-webkit-text-stroke:.22px currentColor;'>INFINITE</span>
<span class="t" style='left:785.40px;top:220.62px;font-size:8.6px;color:#3b3b3b;font-weight:700;transform:scaleX(0.9020);transform-origin:0 0;-webkit-text-stroke:.22px currentColor;'>CAMPUS</span>
<span class="t" style='left:868.50px;top:210.02px;font-size:8.6px;color:#3b3b3b;font-weight:700;transform:scaleX(0.8960);transform-origin:0 0;-webkit-text-stroke:.22px currentColor;'>WORK AT RSS</span>
<span class="t" style='left:962.30px;top:210.02px;font-size:8.6px;color:#3b3b3b;font-weight:700;letter-spacing:-0.130px;-webkit-text-stroke:.22px currentColor;'>NOMINATE A</span>
<span class="t" style='left:957.90px;top:220.62px;font-size:8.6px;color:#3b3b3b;font-weight:700;transform:scaleX(0.9003);transform-origin:0 0;-webkit-text-stroke:.22px currentColor;'>STAFF MEMBER</span>
<span class="t" style='left:762.40px;top:264.74px;font-size:9.4px;color:#e4edf8;transform:scaleX(0.9034);transform-origin:0 0;'>Home</span>
<span class="t" style='left:787.50px;top:264.74px;font-size:9.4px;color:#e4edf8;'>»</span>
<span class="t" style='left:795.60px;top:264.74px;font-size:9.4px;color:#e4edf8;transform:scaleX(0.8924);transform-origin:0 0;'>Students &amp; Families</span>
<span class="t" style='left:872.70px;top:264.74px;font-size:9.4px;color:#e4edf8;'>»</span>
<span class="t" style='left:880.70px;top:264.74px;font-size:9.4px;color:#e4edf8;transform:scaleX(0.9038);transform-origin:0 0;'>Enroll a Student</span>
<span class="t" style='left:943.70px;top:264.74px;font-size:9.4px;color:#e4edf8;'>»</span>
<span class="t" style='left:951.60px;top:264.74px;font-size:9.4px;color:#e4edf8;transform:scaleX(0.9087);transform-origin:0 0;'>Student Registration</span>
<span class="t" style='left:300.00px;top:334.04px;font-size:17.2px;color:#7dc242;font-weight:700;letter-spacing:-0.145px;'>Enroll a Student</span>
<span class="t" style='left:300.00px;top:375.30px;font-size:9.1px;color:#2b2b2b;font-weight:700;transform:scaleX(0.9392);transform-origin:0 0;'>Student Registration</span>
<span class="t" style='left:427.80px;top:374.27px;font-size:11.5px;color:#8cc65a;font-weight:700;-webkit-text-stroke:.3px currentColor;'>›</span>
<span class="t" style='left:1001.20px;top:336.43px;font-size:9.3px;color:#474747;transform:scaleX(0.9125);transform-origin:0 0;'>Edit Page</span>
<span class="t" style='left:506.30px;top:354.11px;font-size:10.5px;color:#454545;letter-spacing:0.028px;'>If you have any issue with online registration, you can reach out to the data manager of the school your student</span>
<span class="t" style='left:734.50px;top:368.11px;font-size:10.5px;color:#454545;letter-spacing:0.015px;'>is attending.</span>
<span class="t" style='left:554.60px;top:414.14px;font-size:19.8px;color:#ffffff;font-weight:700;letter-spacing:0.261px;'>2025-2026</span>
<span class="t" style='left:658.20px;top:414.14px;font-size:19.8px;color:#ffffff;font-weight:700;transform:scaleX(0.9643);transform-origin:0 0;'>School</span>
<span class="t" style='left:729.60px;top:414.14px;font-size:19.8px;color:#ffffff;font-weight:700;letter-spacing:0.418px;'>Registration</span>
<span class="t" style='left:857.70px;top:414.14px;font-size:19.8px;color:#ffffff;font-weight:700;letter-spacing:0.900px;'>Information</span>
<span class="t" style='left:514.20px;top:467.15px;font-size:15.3px;color:#25426b;font-weight:700;letter-spacing:0.236px;'>Kindergarten</span>
<span class="t" style='left:617.00px;top:467.15px;font-size:15.3px;color:#3d3d3d;letter-spacing:0.384px;'>and</span>
<span class="t" style='left:648.30px;top:467.15px;font-size:15.3px;color:#25426b;font-weight:700;letter-spacing:0.280px;word-spacing:-0.836px;'>New Student Registration</span>
<span class="t" style='left:844.90px;top:467.15px;font-size:15.3px;color:#3d3d3d;letter-spacing:0.216px;word-spacing:-0.708px;'>for the 2025-2026 school</span>
<span class="t" style='left:508.80px;top:489.05px;font-size:15.3px;color:#3d3d3d;letter-spacing:0.348px;word-spacing:-0.971px;'>year will open on March 1st, 2025.  This page will have an updated link for</span>
<span class="t" style='left:682.00px;top:510.95px;font-size:15.3px;color:#3d3d3d;letter-spacing:0.354px;word-spacing:-0.983px;'>that registration as well.</span>
<span class="t" style='left:507.70px;top:540.65px;font-size:15.3px;color:#2a2a2a;font-weight:700;letter-spacing:0.218px;word-spacing:-0.711px;'>Returning Student Registration</span>
<span class="t" style='left:745.00px;top:540.65px;font-size:15.3px;color:#3d3d3d;letter-spacing:0.301px;word-spacing:-0.877px;'>(for students already enrolled in Rowan-</span>
<span class="t" style='left:506.00px;top:562.55px;font-size:15.3px;color:#3d3d3d;'>Salisbury Schools) will open</span>
<span class="t" style='left:701.70px;top:562.55px;font-size:15.3px;color:#2a2a2a;font-weight:700;letter-spacing:0.412px;word-spacing:-1.099px;'>in the Infinite Campus App/Website</span>
<span class="t" style='left:971.80px;top:562.55px;font-size:15.3px;color:#3d3d3d;letter-spacing:0.529px;word-spacing:-1.333px;'>on April</span>
<span class="t" style='left:517.50px;top:584.35px;font-size:15.3px;color:#3d3d3d;letter-spacing:0.460px;word-spacing:-1.196px;'>1st, 2025.  Parents will be notified that they need to update information</span>
<span class="t" style='left:636.70px;top:606.25px;font-size:15.3px;color:#3d3d3d;letter-spacing:0.478px;word-spacing:-1.231px;'>before viewing student information.</span>
<span class="t" style='left:196.00px;top:658.52px;font-size:8.6px;color:#c9c9c9;letter-spacing:0.755px;'>0:00</span>
<span class="t" style='left:56.40px;top:680.06px;font-size:8.2px;color:#e9e9e9;letter-spacing:-0.089px;'>https://800.ncsis.gov/campus/OLRLogin/psu800rowan</span>
<span class="t" style='left:1190.50px;top:677.97px;font-size:7.6px;color:#111111;transform:scaleX(0.9018);transform-origin:0 0;'>Opens a new window</span>
<span class="t" style='left:888.50px;top:172.23px;font-size:8px;color:#2b4a76;font-weight:700;transform:scaleX(0.8029);transform-origin:0 0;'>JOBS</span>
<span class="t" style='left:784.00px;top:179.99px;font-size:5.8px;color:#4a5a7a;font-style:italic;letter-spacing:0.072px;'>Infinite</span>
<span class="t" style='left:790.00px;top:181.77px;font-size:7.6px;color:#3a4c70;transform:scaleX(0.9193);transform-origin:0 0;-webkit-text-stroke:.3px currentColor;'>Campus</span>
<span class="t" style='left:447.60px;top:104.95px;font-size:3.6px;color:#d9572f;font-family:"Liberation Serif",serif;'>™</span>
</div>
<div class="b" style="left:250.0px;top:22px;width:15px;height:12px;background:linear-gradient(90deg,rgba(49,62,68,0),rgba(49,62,68,.92))"></div>
<div class="b" style="left:398.0px;top:22px;width:15px;height:12px;background:linear-gradient(90deg,rgba(49,62,68,0),rgba(49,62,68,.92))"></div>
<div class="b" style="left:547.0px;top:22px;width:15px;height:12px;background:linear-gradient(90deg,rgba(49,62,68,0),rgba(49,62,68,.92))"></div>
<div class="b" style="left:699.5px;top:22px;width:15px;height:12px;background:linear-gradient(90deg,rgba(49,62,68,0),rgba(49,62,68,.92))"></div>
<div class="b" style="left:832.0px;top:22px;width:15px;height:12px;background:linear-gradient(90deg,rgba(68,86,93,0),rgba(68,86,93,.92))"></div>
<div class="b" style="left:993.0px;top:22px;width:15px;height:12px;background:linear-gradient(90deg,rgba(49,62,68,0),rgba(49,62,68,.92))"></div>
<div class="b" style="left:1143.0px;top:22px;width:15px;height:12px;background:linear-gradient(90deg,rgba(49,62,68,0),rgba(49,62,68,.92))"></div>

</body>
</html>
